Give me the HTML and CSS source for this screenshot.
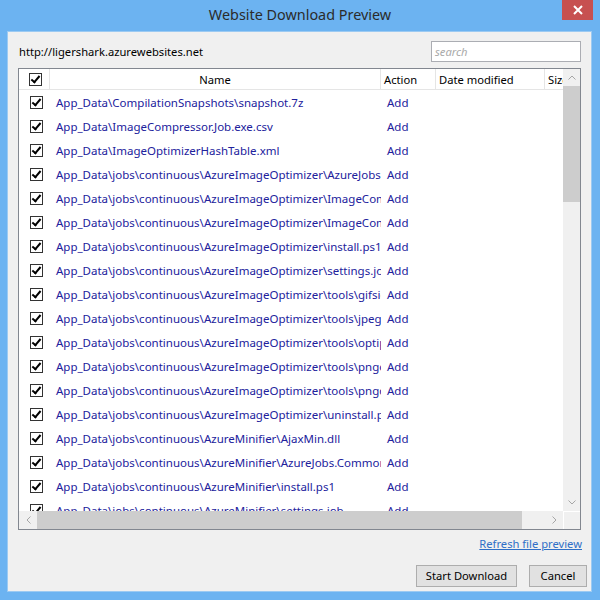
FILE: index.html
```html
<!DOCTYPE html>
<html>
<head>
<meta charset="utf-8">
<link rel="stylesheet" href="styles.css">
</head>
<body>
<div class="window">
  <div class="titlebar">
    <div class="title">Website Download Preview</div>
    <div class="close"><svg width="10" height="10" viewBox="0 0 10 10"><path d="M1 1 L9 9 M9 1 L1 9" stroke="#fff" stroke-width="2" fill="none"/></svg></div>
  </div>
  <div class="client">
    <div class="toprow">
      <span class="url">http://ligershark.azurewebsites.net</span>
      <div class="search">search</div>
    </div>
    <div class="list">
      <div class="viewport">
        <div class="row header">
          <div class="c-check"><span class="cb"></span></div>
          <div class="c-name hname">Name</div>
          <div class="c-action">Action</div>
          <div class="c-date">Date modified</div>
          <div class="c-size">Size</div>
        </div>
        <div class="row"><div class="c-check"><span class="cb"></span></div><div class="c-name">App_Data\CompilationSnapshots\snapshot.7z</div><div class="c-action">Add</div><div class="c-date"></div><div class="c-size"></div></div>
        <div class="row"><div class="c-check"><span class="cb"></span></div><div class="c-name">App_Data\ImageCompressor.Job.exe.csv</div><div class="c-action">Add</div><div class="c-date"></div><div class="c-size"></div></div>
        <div class="row"><div class="c-check"><span class="cb"></span></div><div class="c-name">App_Data\ImageOptimizerHashTable.xml</div><div class="c-action">Add</div><div class="c-date"></div><div class="c-size"></div></div>
        <div class="row"><div class="c-check"><span class="cb"></span></div><div class="c-name">App_Data\jobs\continuous\AzureImageOptimizer\AzureJobs.Common.dll</div><div class="c-action">Add</div><div class="c-date"></div><div class="c-size"></div></div>
        <div class="row"><div class="c-check"><span class="cb"></span></div><div class="c-name">App_Data\jobs\continuous\AzureImageOptimizer\ImageCompressor.Job.exe</div><div class="c-action">Add</div><div class="c-date"></div><div class="c-size"></div></div>
        <div class="row"><div class="c-check"><span class="cb"></span></div><div class="c-name">App_Data\jobs\continuous\AzureImageOptimizer\ImageCompressor.Job.exe.config</div><div class="c-action">Add</div><div class="c-date"></div><div class="c-size"></div></div>
        <div class="row"><div class="c-check"><span class="cb"></span></div><div class="c-name">App_Data\jobs\continuous\AzureImageOptimizer\install.ps1</div><div class="c-action">Add</div><div class="c-date"></div><div class="c-size"></div></div>
        <div class="row"><div class="c-check"><span class="cb"></span></div><div class="c-name">App_Data\jobs\continuous\AzureImageOptimizer\settings.job</div><div class="c-action">Add</div><div class="c-date"></div><div class="c-size"></div></div>
        <div class="row"><div class="c-check"><span class="cb"></span></div><div class="c-name">App_Data\jobs\continuous\AzureImageOptimizer\tools\gifsicle.exe</div><div class="c-action">Add</div><div class="c-date"></div><div class="c-size"></div></div>
        <div class="row"><div class="c-check"><span class="cb"></span></div><div class="c-name">App_Data\jobs\continuous\AzureImageOptimizer\tools\jpegtran.exe</div><div class="c-action">Add</div><div class="c-date"></div><div class="c-size"></div></div>
        <div class="row"><div class="c-check"><span class="cb"></span></div><div class="c-name">App_Data\jobs\continuous\AzureImageOptimizer\tools\optipng.exe</div><div class="c-action">Add</div><div class="c-date"></div><div class="c-size"></div></div>
        <div class="row"><div class="c-check"><span class="cb"></span></div><div class="c-name">App_Data\jobs\continuous\AzureImageOptimizer\tools\pngout.exe</div><div class="c-action">Add</div><div class="c-date"></div><div class="c-size"></div></div>
        <div class="row"><div class="c-check"><span class="cb"></span></div><div class="c-name">App_Data\jobs\continuous\AzureImageOptimizer\tools\pngquant.exe</div><div class="c-action">Add</div><div class="c-date"></div><div class="c-size"></div></div>
        <div class="row"><div class="c-check"><span class="cb"></span></div><div class="c-name">App_Data\jobs\continuous\AzureImageOptimizer\uninstall.ps1</div><div class="c-action">Add</div><div class="c-date"></div><div class="c-size"></div></div>
        <div class="row"><div class="c-check"><span class="cb"></span></div><div class="c-name">App_Data\jobs\continuous\AzureMinifier\AjaxMin.dll</div><div class="c-action">Add</div><div class="c-date"></div><div class="c-size"></div></div>
        <div class="row"><div class="c-check"><span class="cb"></span></div><div class="c-name">App_Data\jobs\continuous\AzureMinifier\AzureJobs.Common.dll</div><div class="c-action">Add</div><div class="c-date"></div><div class="c-size"></div></div>
        <div class="row"><div class="c-check"><span class="cb"></span></div><div class="c-name">App_Data\jobs\continuous\AzureMinifier\install.ps1</div><div class="c-action">Add</div><div class="c-date"></div><div class="c-size"></div></div>
        <div class="row"><div class="c-check"><span class="cb"></span></div><div class="c-name">App_Data\jobs\continuous\AzureMinifier\settings.job</div><div class="c-action">Add</div><div class="c-date"></div><div class="c-size"></div></div>
      </div>
      <div class="vscroll">
        <div class="sbtn"><svg width="8" height="5" viewBox="0 0 8 5"><path d="M0.5 4.5 L4 1 L7.5 4.5" stroke="#a6a6a6" fill="none"/></svg></div>
        <div class="vthumb"></div>
        <div class="vtrack"></div>
        <div class="sbtn"><svg width="8" height="5" viewBox="0 0 8 5"><path d="M0.5 0.5 L4 4 L7.5 0.5" stroke="#a6a6a6" fill="none"/></svg></div>
      </div>
      <div class="hscroll">
        <div class="hbtn"><svg width="5" height="8" viewBox="0 0 5 8"><path d="M4.5 0.5 L1 4 L4.5 7.5" stroke="#a6a6a6" fill="none"/></svg></div>
        <div class="hthumb"></div>
        <div class="htrack"></div>
        <div class="hbtn"><svg width="5" height="8" viewBox="0 0 5 8"><path d="M0.5 0.5 L4 4 L0.5 7.5" stroke="#a6a6a6" fill="none"/></svg></div>
      </div>
      <div class="corner"></div>
    </div>
    <div class="refresh"><a href="#">Refresh file preview</a></div>
    <div class="buttons">
      <button class="btn start">Start Download</button>
      <button class="btn cancel">Cancel</button>
    </div>
  </div>
</div>
</body>
</html>
```

FILE: styles.css
```css
html, body {
  margin: 0;
  padding: 0;
}
body {
  width: 600px;
  height: 600px;
  overflow: hidden;
  font-family: "Noto Sans", "Open Sans", sans-serif;
  font-size: 11.2px;
}
.window {
  width: 600px;
  height: 600px;
  background: #6cb3f1;
  display: flex;
  flex-direction: column;
}
.titlebar {
  height: 31px;
  display: grid;
  grid-template-columns: 1fr auto 1fr;
  align-items: start;
}
.title {
  grid-column: 2;
  font-size: 14.4px;
  color: #2b2b2b;
  line-height: 20px;
  padding-top: 5px;
}
.close {
  grid-column: 3;
  justify-self: end;
  width: 31px;
  height: 20px;
  margin-right: 7px;
  background: #c75050;
  display: flex;
  align-items: center;
  justify-content: center;
}
.close svg { display: block; }
.client {
  margin: 0 8px 8px 7px;
  height: 561px;
  box-sizing: border-box;
  background: #f0f0f0;
  border: 1px solid #9ccaf2;
  padding: 9px 4px 0 10px;
  display: flex;
  flex-direction: column;
}
.toprow {
  height: 21px;
  margin-right: 6px;
  display: flex;
  align-items: center;
  justify-content: space-between;
}
.url {
  color: #000;
  padding-left: 1px;
}
.search {
  width: 150px;
  height: 21px;
  box-sizing: border-box;
  border: 1px solid #abadb3;
  background: #fff;
  color: #a9a9a9;
  font-style: italic;
  line-height: 19px;
  padding-left: 3px;
}
.list {
  margin-top: 6px;
  margin-right: 6px;
  display: grid;
  grid-template-columns: 544px 17px;
  grid-template-rows: 442px 18px;
  border: 1px solid #828790;
  background: #fff;
}
.viewport {
  overflow: hidden;
}
.row {
  display: grid;
  grid-template-columns: 31px 331px 55px 109px 18px;
  height: 24px;
  align-items: center;
  white-space: nowrap;
  color: #21219c;
  font-size: 11.5px;
}
.row > div {
  overflow: hidden;
  height: 100%;
  display: flex;
  align-items: center;
}
.header {
  height: 21px;
  box-sizing: border-box;
  border-bottom: 1px solid #e5e5e5;
  color: #000;
  font-size: 11.2px;
}
.header > div {
  box-sizing: border-box;
  border-right: 1px solid #e5e5e5;
  padding-left: 3px;
}
.header > .c-check { padding-left: 10px; }
.header > .c-size { border-right: 0; }
.header .hname { justify-content: center; padding-left: 0; }
.c-check { padding-left: 11px; }
.row:not(.header) .c-name { padding-left: 6px; padding-right: 2px; }
.row:not(.header) .c-action { padding-left: 6px; }
.cb {
  display: block;
  position: relative;
  width: 13px;
  height: 13px;
  box-sizing: border-box;
  border: 1px solid #333;
  background: #fff;
  flex: none;
}
.cb::after {
  content: "";
  position: absolute;
  left: 3px;
  top: 0px;
  width: 3px;
  height: 7px;
  border: solid #000;
  border-width: 0 2px 2px 0;
  transform: rotate(40deg);
}
.vscroll {
  background: #f0f0f0;
  display: flex;
  flex-direction: column;
}
.sbtn {
  height: 17px;
  display: flex;
  align-items: center;
  justify-content: center;
  flex: none;
}
.vthumb {
  height: 116px;
  background: #cdcdcd;
  flex: none;
}
.vtrack { flex: 1; }
.hscroll {
  background: #f0f0f0;
  display: flex;
}
.hbtn {
  width: 18px;
  display: flex;
  align-items: center;
  justify-content: center;
  flex: none;
}
.hthumb {
  width: 485px;
  background: #cdcdcd;
  flex: none;
}
.htrack { flex: 1; }
.corner {
  background: #f0f0f0;
  border-left: 1px solid #fff;
  border-top: 1px solid #fff;
}
.refresh {
  margin-top: 6px;
  margin-right: 5px;
  text-align: right;
  line-height: 16px;
}
.refresh a {
  color: #2f6fc7;
  text-decoration: underline;
}
.buttons {
  margin-top: 13px;
  display: flex;
  justify-content: flex-end;
  gap: 12px;
}
.btn {
  height: 22px;
  box-sizing: border-box;
  border: 1px solid #adadad;
  background: #e1e1e1;
  font-family: "Noto Sans", "Open Sans", sans-serif;
  font-size: 11.2px;
  color: #000;
  padding: 0;
  line-height: 18px;
}
.start { width: 101px; }
.cancel { width: 58px; }
```
